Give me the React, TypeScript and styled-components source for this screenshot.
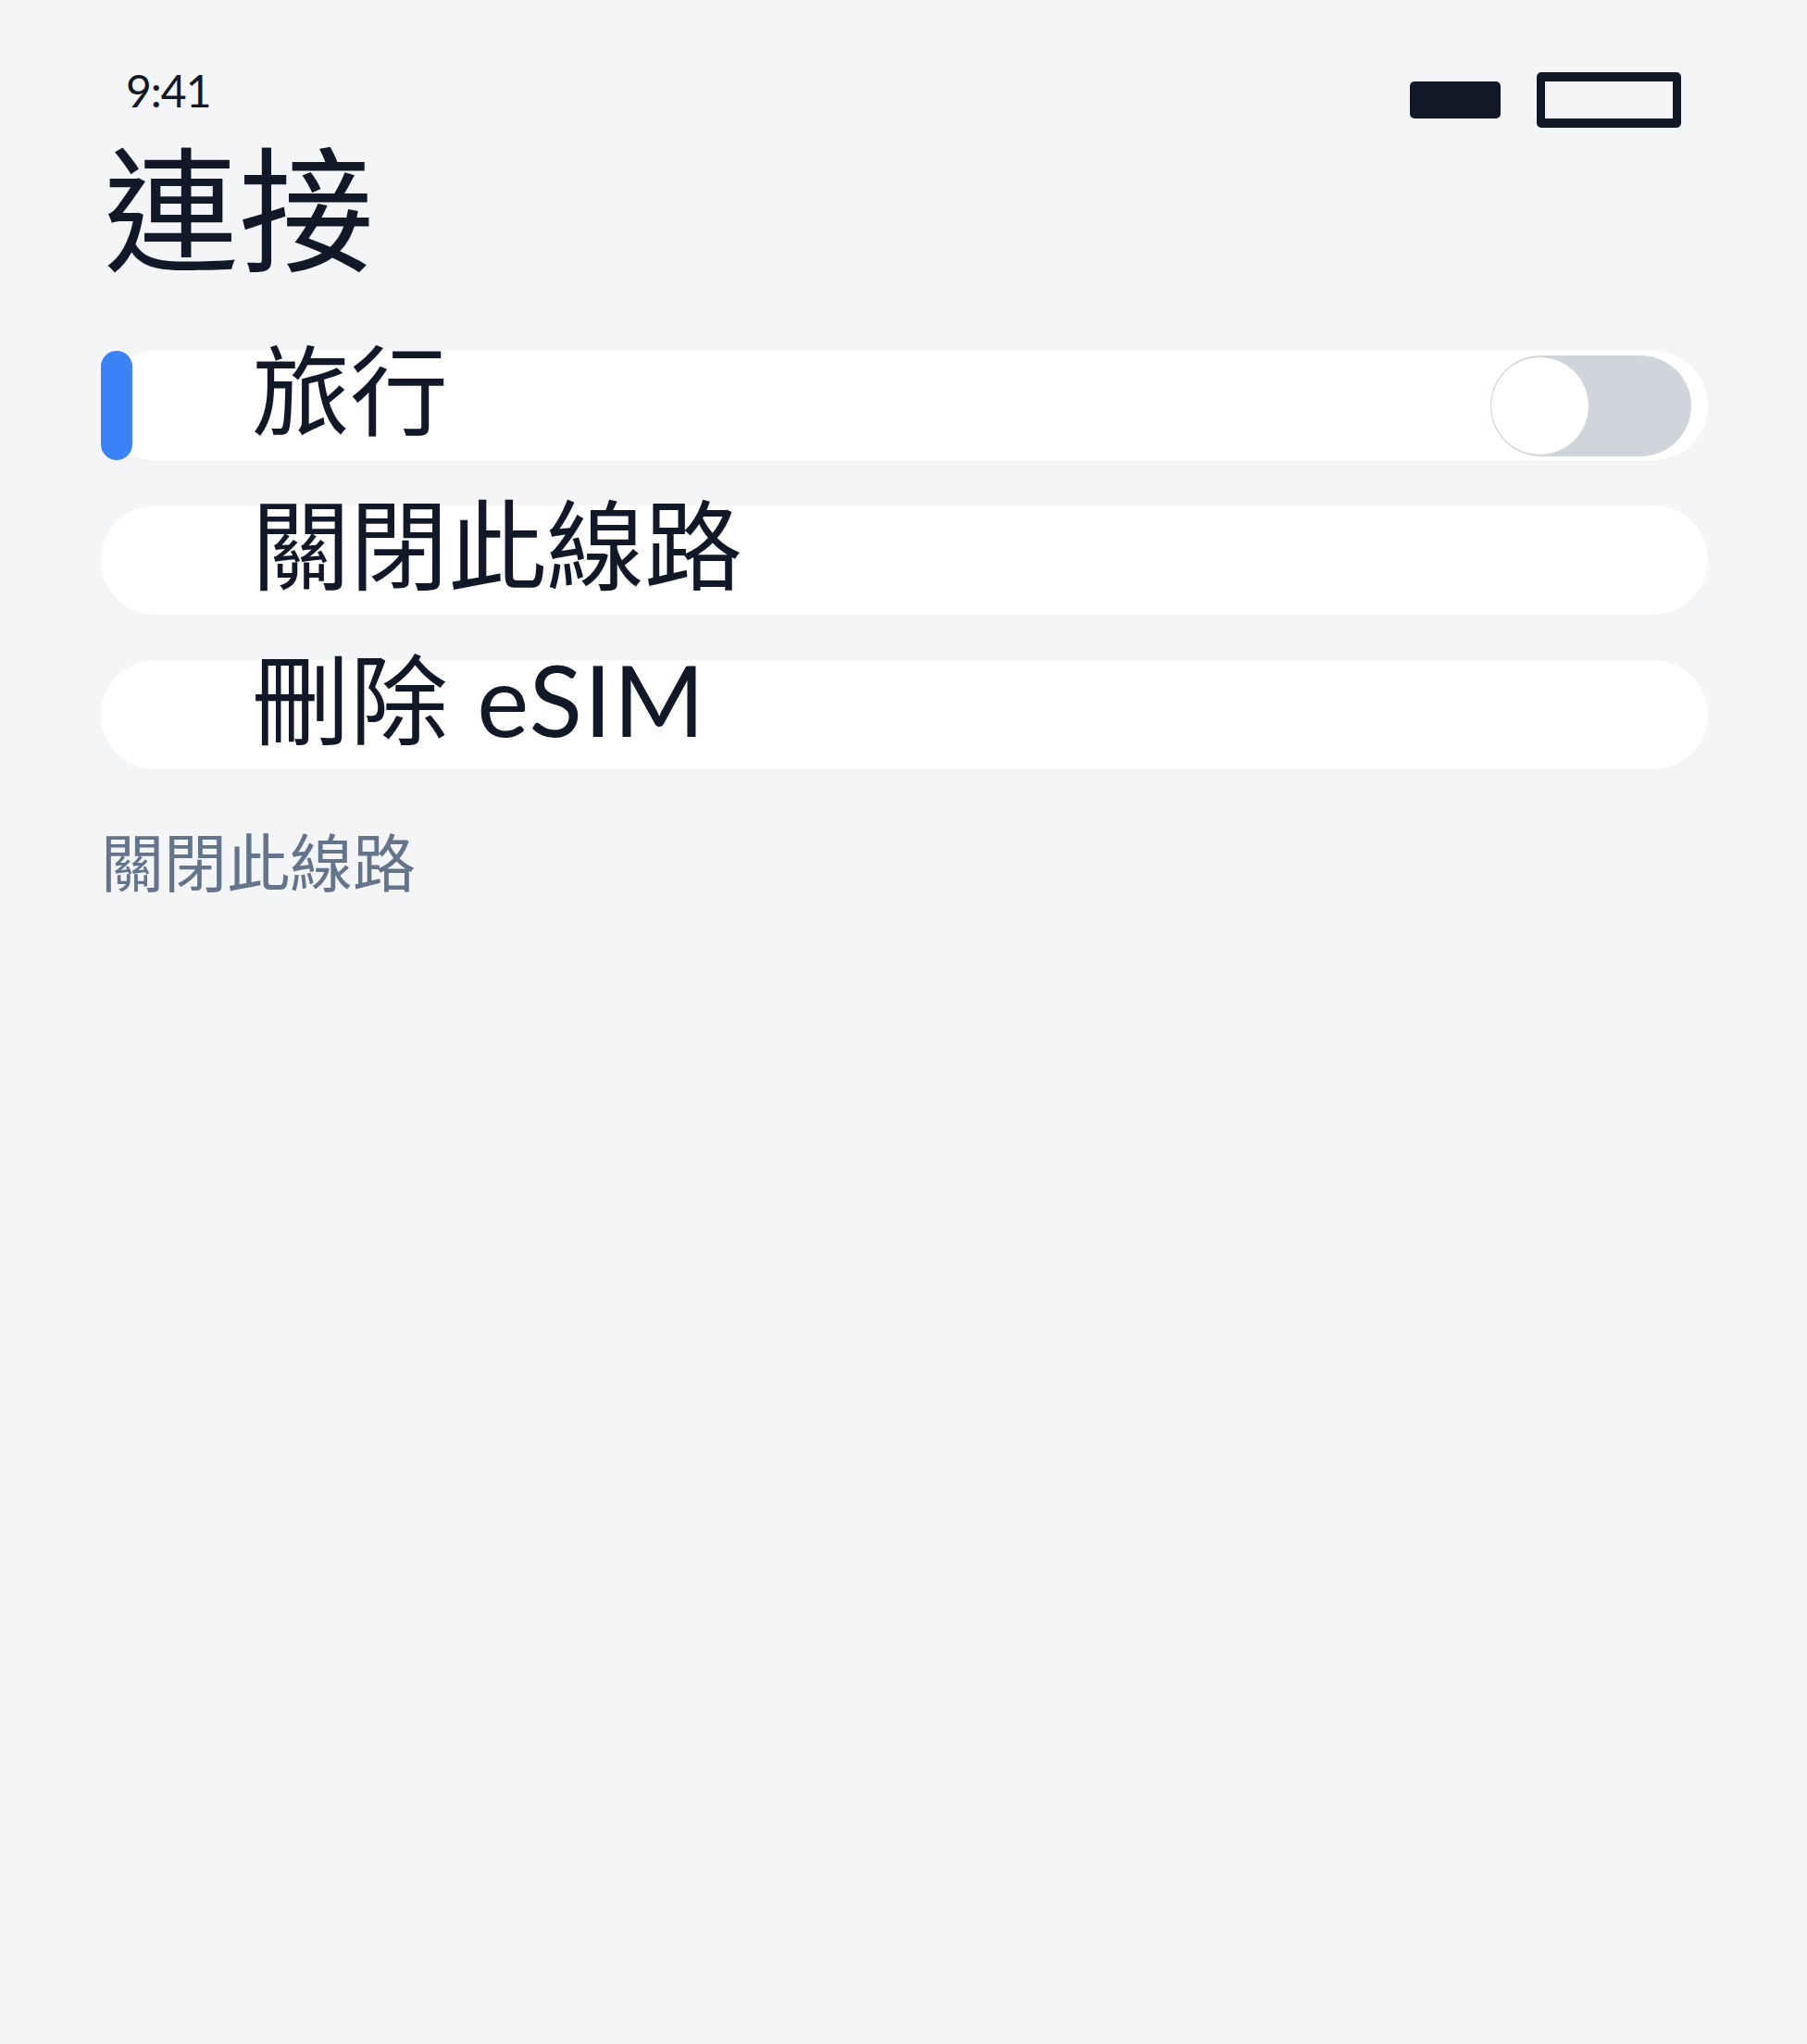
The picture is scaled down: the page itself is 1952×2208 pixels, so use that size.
import React, { useState } from "react";
import styled, { createGlobalStyle } from "styled-components";

const GlobalStyle = createGlobalStyle`
  html, body {
    margin: 0;
    padding: 0;
    background: #f4f5f7;
  }
  body {
    font-family: Lato, "Noto Sans CJK TC", sans-serif;
    color: #111827;
  }
`;

const Screen = styled.div`
  min-height: 2208px;
  box-sizing: border-box;
  padding: 0 107px 0 109px;
  background: #f4f5f7;
`;

const StatusBar = styled.div`
  display: flex;
  justify-content: space-between;
  align-items: flex-start;
  padding: 74px 29px 0 27px;
`;

const Time = styled.span`
  font-size: 48px;
  line-height: 1;
  letter-spacing: -1px;
  color: #111827;
`;

const StatusIcons = styled.div`
  display: flex;
  align-items: center;
  gap: 39px;
  margin-top: 4px;
`;

const Signal = styled.div`
  width: 98px;
  height: 40px;
  border-radius: 5px;
  background: #111827;
`;

const Battery = styled.div`
  width: 156px;
  height: 60px;
  box-sizing: border-box;
  border: 9px solid #111827;
  border-top-width: 10px;
  border-bottom-width: 10px;
  border-radius: 5px;
`;

const Title = styled.h1`
  margin: 15px 0 0 3px;
  font-size: 146px;
  font-weight: 400;
  line-height: 1;
`;

const List = styled.div`
  display: flex;
  flex-direction: column;
  gap: 49px;
  margin-top: 80px;
`;

const Row = styled.div<{ $active?: boolean }>`
  position: relative;
  display: flex;
  align-items: center;
  height: 118px;
  padding: 0 18px 0 163px;
  border-radius: 59px;
  background: #ffffff;

  &::before {
    content: "";
    display: ${(p) => (p.$active ? "block" : "none")};
    position: absolute;
    left: 0;
    top: 0;
    width: 34px;
    height: 100%;
    border-radius: 17px;
    background: #3b82f6;
  }
`;

const Label = styled.span`
  flex: 1;
  align-self: flex-start;
  margin-top: -11px;
  font-size: 106px;
  line-height: 1;
  white-space: nowrap;
  color: #111827;
`;

const Latin = styled.span`
  margin-left: 4px;
  letter-spacing: 2px;
`;

const Track = styled.button<{ $on: boolean }>`
  display: flex;
  justify-content: ${(p) => (p.$on ? "flex-end" : "flex-start")};
  align-items: center;
  width: 217px;
  height: 109px;
  padding: 0;
  border: none;
  border-radius: 55px;
  background: ${(p) => (p.$on ? "#3b82f6" : "#d1d5db")};
  cursor: pointer;
`;

const Knob = styled.span`
  width: 107px;
  height: 107px;
  box-sizing: border-box;
  border-radius: 50%;
  border: 1.5px solid #d1d5db;
  background: #ffffff;
`;

const Caption = styled.p`
  margin: 67px 0 0;
  font-size: 68px;
  line-height: 1;
  color: #64748b;
`;

export default function App() {
  const [travel, setTravel] = useState(false);

  return (
    <>
      <GlobalStyle />
      <Screen>
        <StatusBar>
          <Time>9:41</Time>
          <StatusIcons>
            <Signal />
            <Battery />
          </StatusIcons>
        </StatusBar>
        <Title>連接</Title>
        <List>
          <Row $active>
            <Label>旅行</Label>
            <Track $on={travel} onClick={() => setTravel(!travel)}>
              <Knob />
            </Track>
          </Row>
          <Row>
            <Label>關閉此線路</Label>
          </Row>
          <Row>
            <Label>
              刪除 <Latin>eSIM</Latin>
            </Label>
          </Row>
        </List>
        <Caption>關閉此線路</Caption>
      </Screen>
    </>
  );
}
